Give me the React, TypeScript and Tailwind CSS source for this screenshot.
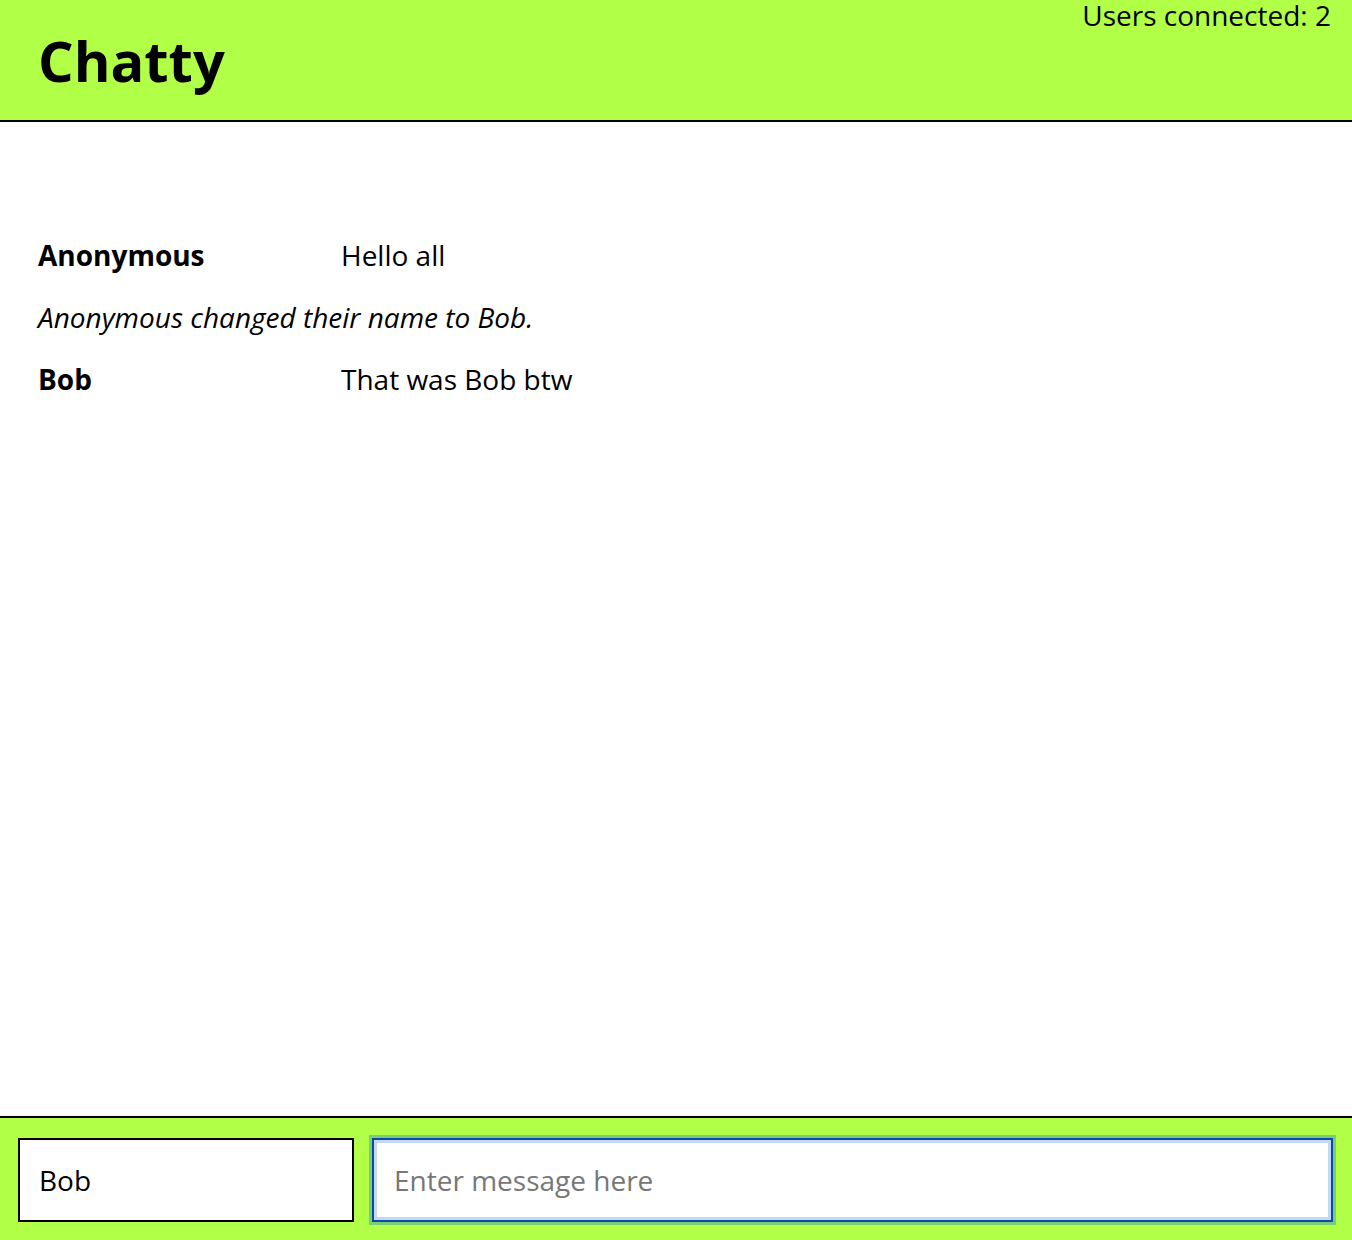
import React from 'react';

interface ChatMessage {
  id: number;
  kind: 'message' | 'notification';
  username?: string;
  content: string;
}

const messages: ChatMessage[] = [
  { id: 1, kind: 'message', username: 'Anonymous', content: 'Hello all' },
  { id: 2, kind: 'notification', content: 'Anonymous changed their name to Bob.' },
  { id: 3, kind: 'message', username: 'Bob', content: 'That was Bob btw' },
];

const NavBar: React.FC<{ userCount: number }> = ({ userCount }) => (
  <nav className="relative flex h-[122px] shrink-0 items-center border-b-2 border-black bg-[#b1ff47] pl-[38px]">
    <h1 className="text-[56px] font-bold leading-none text-black">Chatty</h1>
    <span className="absolute right-[21px] top-0 text-[28px] leading-[30px] text-black">
      Users connected: {userCount}
    </span>
  </nav>
);

const MessageList: React.FC<{ items: ChatMessage[] }> = ({ items }) => (
  <main className="flex-1 overflow-y-auto bg-white pl-[38px] pt-[102px]">
    {items.map((msg) =>
      msg.kind === 'notification' ? (
        <div key={msg.id} className="flex h-[62px] items-center text-[28px] italic text-black">
          {msg.content}
        </div>
      ) : (
        <div key={msg.id} className="flex h-[62px] items-center text-[28px] text-black">
          <span className="w-[303px] shrink-0 font-bold">{msg.username}</span>
          <span>{msg.content}</span>
        </div>
      )
    )}
  </main>
);

const ChatBar: React.FC<{ currentUser: string }> = ({ currentUser }) => (
  <footer className="flex h-[124px] shrink-0 items-center gap-[18px] border-t-2 border-black bg-[#b1ff47] pl-[18px] pr-[19px] pt-[1px]">
    <input
      defaultValue={currentUser}
      className="h-[84px] w-[336px] shrink-0 border-2 border-black bg-white pl-[19px] text-[28px] text-black outline-none"
    />
    <input
      placeholder="Enter message here"
      className="h-[84px] flex-1 border-2 border-[#0b4aa6] bg-white pl-[20px] text-[28px] text-black shadow-[inset_0_0_0_3px_#c4d7f3,0_0_0_3px_rgba(40,130,190,0.4)] outline-none placeholder:text-[#777777]"
    />
  </footer>
);

export default function App() {
  return (
    <div
      className="flex h-[1240px] w-full flex-col overflow-hidden bg-white"
      style={{ fontFamily: '"Open Sans", "Noto Sans", sans-serif' }}
    >
      <NavBar userCount={2} />
      <MessageList items={messages} />
      <ChatBar currentUser="Bob" />
    </div>
  );
}
